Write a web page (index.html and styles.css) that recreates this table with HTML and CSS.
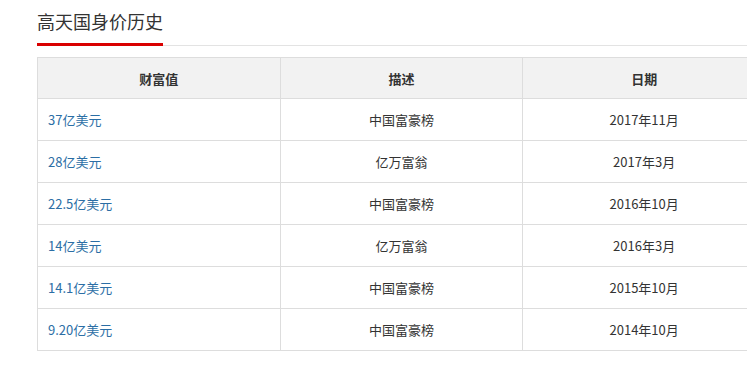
FILE: index.html
```html
<!DOCTYPE html>
<html lang="zh">
<head>
<meta charset="utf-8">
<link rel="stylesheet" href="styles.css">
</head>
<body>
<div class="wrap">
  <div class="head">
    <h2 class="title">高天国身价历史</h2>
  </div>
  <table class="tbl">
    <thead>
      <tr><th>财富值</th><th>描述</th><th>日期</th></tr>
    </thead>
    <tbody>
      <tr><td class="val">37亿美元</td><td>中国富豪榜</td><td>2017年11月</td></tr>
      <tr><td class="val">28亿美元</td><td>亿万富翁</td><td>2017年3月</td></tr>
      <tr><td class="val">22.5亿美元</td><td>中国富豪榜</td><td>2016年10月</td></tr>
      <tr><td class="val">14亿美元</td><td>亿万富翁</td><td>2016年3月</td></tr>
      <tr><td class="val">14.1亿美元</td><td>中国富豪榜</td><td>2015年10月</td></tr>
      <tr><td class="val">9.20亿美元</td><td>中国富豪榜</td><td>2014年10月</td></tr>
    </tbody>
  </table>
</div>
</body>
</html>
```
FILE: styles.css
```css
html, body {
  margin: 0;
  padding: 0;
  background: #fff;
  overflow: hidden;
}
body {
  font-family: "Noto Sans CJK SC", "Noto Sans", sans-serif;
  color: #333;
}
.wrap {
  padding-left: 37px;
  width: 710px;
}
.head {
  display: flex;
  border-bottom: 1px solid #e3e3e3;
  margin-right: -10px;
}
.title {
  margin: 0 0 -1px 0;
  padding-top: 6px;
  font-size: 18px;
  font-weight: normal;
  line-height: 30px;
  height: 37px;
  width: 126px;
  white-space: nowrap;
  border-bottom: 3px solid #d90000;
  color: #333;
}
.tbl {
  margin-top: 11px;
  border-collapse: collapse;
  width: 729px;
  table-layout: fixed;
  font-size: 13px;
}
.tbl th, .tbl td {
  border: 1px solid #ddd;
  text-align: center;
  height: 42px;
  padding: 0 10px;
  box-sizing: border-box;
}
.tbl th {
  background: #f2f2f2;
  font-weight: bold;
  height: 41px;
  color: #333;
}
.tbl td.val {
  text-align: left;
  color: #2b6ea5;
}
```
